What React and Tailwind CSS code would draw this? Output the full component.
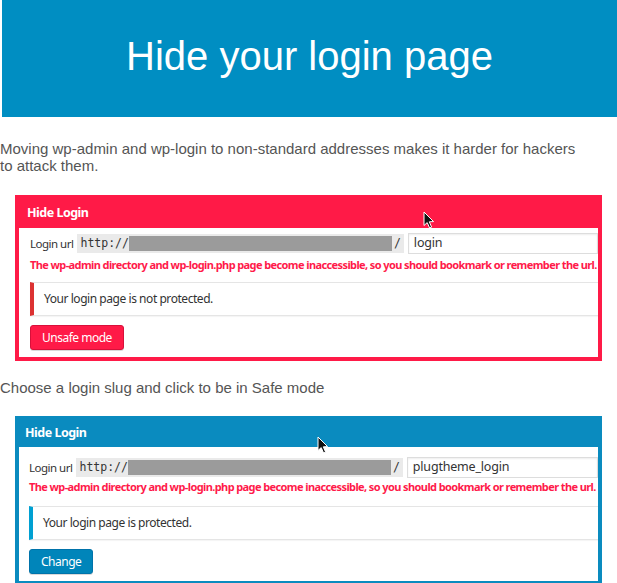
import React from "react";

const ubuntu = { fontFamily: '"Noto Sans", "Open Sans", sans-serif' };

function Cursor({ className }) {
  return (
    <svg className={className} width="12" height="18" viewBox="0 0 12 18">
      <path d="M1 1 L1 14.5 L4.2 11.6 L6.6 17 L8.6 16.1 L6.3 10.8 L10.6 10.6 Z" fill="#111" stroke="#fff" strokeWidth="1" />
    </svg>
  );
}

function Panel({ color, slug, protectedOk, btn, btnColor, btnBorder, noticeColor, cursorClass, headerClass, bodyClass, rowGap, noticeGap }) {
  return (
    <div className={`relative mx-[15px] border-4 ${color}`} style={ubuntu}>
      <div className={`flex items-center text-white font-bold text-[12.5px] tracking-[-0.5px] ${headerClass}`}>Hide Login</div>
      <Cursor className={cursorClass} />
      <div className={`bg-white pr-0 pb-[7px] overflow-hidden ${bodyClass}`}>
        <div className="flex items-center h-[21px] text-[11.5px] tracking-[-0.5px] text-[#333] whitespace-nowrap">
          <span className="mr-[4px]">Login url</span>
          <span className="flex items-center h-[19px] bg-[#eaeaea] pl-[3px] pr-[3px] text-[11.5px] tracking-normal text-[#333]" style={{ fontFamily: '"DejaVu Sans Mono", monospace' }}>
            <span>http://</span>
            <span className="inline-block w-[263px] h-[15px] bg-[#9b9b9b]"></span>
            <span className="ml-[2px]">/</span>
          </span>
          <span className="ml-[4px] flex items-center h-[21px] w-[192px] border border-[#ddd] pl-[5px] text-[12.5px] tracking-[-0.2px] text-[#333] shadow-[inset_0_1px_2px_rgba(0,0,0,0.07)]">{slug}</span>
        </div>
        <div className={`text-[11px] leading-[15px] font-bold tracking-[-0.6px] text-[#ff1a4a] whitespace-nowrap ${rowGap}`}>
          The wp-admin directory and wp-login.php page become inaccessible, so you should bookmark or remember the url.
        </div>
        <div className={`h-[34px] flex items-center border-l-4 ${noticeColor} ${noticeGap} border-y border-y-[#e5e5e5] bg-white shadow-[0_1px_1px_rgba(0,0,0,0.04)] pl-[10px] text-[12px] tracking-[-0.45px] text-[#333]`}>
          {protectedOk ? "Your login page is protected." : "Your login page is not protected."}
        </div>
        <button className={`mt-[9px] h-[25px] px-[11px] rounded-[3px] border ${btnColor} ${btnBorder} text-white text-[12px] tracking-[-0.5px] shadow-[0_1px_0_rgba(0,0,0,0.15)]`}>{btn}</button>
      </div>
    </div>
  );
}

export default function App() {
  return (
    <div className="w-[617px] h-[583px] bg-white overflow-hidden" style={{ fontFamily: '"Liberation Sans", Arial, sans-serif' }}>
      <div className="ml-[2px] h-[117px] bg-[#008ec2] flex items-center justify-center">
        <h1 className="text-white text-[40px] leading-none -mt-[6px]">Hide your login page</h1>
      </div>
      <p className="mt-[23px] w-[590px] text-[15px] leading-[17px] text-[#555]">
        Moving wp-admin and wp-login to non-standard addresses makes it harder for hackers to attack them.
      </p>
      <div className="mt-[21px]">
        <Panel
          color="border-[#ff1a47] bg-[#ff1a47]"
          slug="login"
          protectedOk={false}
          btn="Unsafe mode"
          btnColor="bg-[#ff1a47]"
          btnBorder="border-[#d8103a]"
          noticeColor="border-l-[#dc3232]"
          cursorClass="absolute left-[404px] top-[12px]"
          headerClass="h-[29px] pl-[8px]"
          bodyClass="pl-[11px] pt-[5px]"
          rowGap="mt-[3px]"
          noticeGap="mt-[10px]"
        />
      </div>
      <p className="mt-[18px] text-[15px] leading-[17px] text-[#555]">Choose a login slug and click to be in Safe mode</p>
      <div className="mt-[20px]">
        <Panel
          color="border-[#0a8bbf] bg-[#0a8bbf]"
          slug="plugtheme_login"
          protectedOk={true}
          btn="Change"
          btnColor="bg-[#0085ba]"
          btnBorder="border-[#0073aa]"
          noticeColor="border-l-[#00a0d2]"
          cursorClass="absolute left-[298px] top-[16px]"
          headerClass="h-[27px] pl-[6px]"
          bodyClass="pl-[10px] pt-[10px]"
          rowGap="mt-[1px]"
          noticeGap="mt-[12px]"
        />
      </div>
    </div>
  );
}
